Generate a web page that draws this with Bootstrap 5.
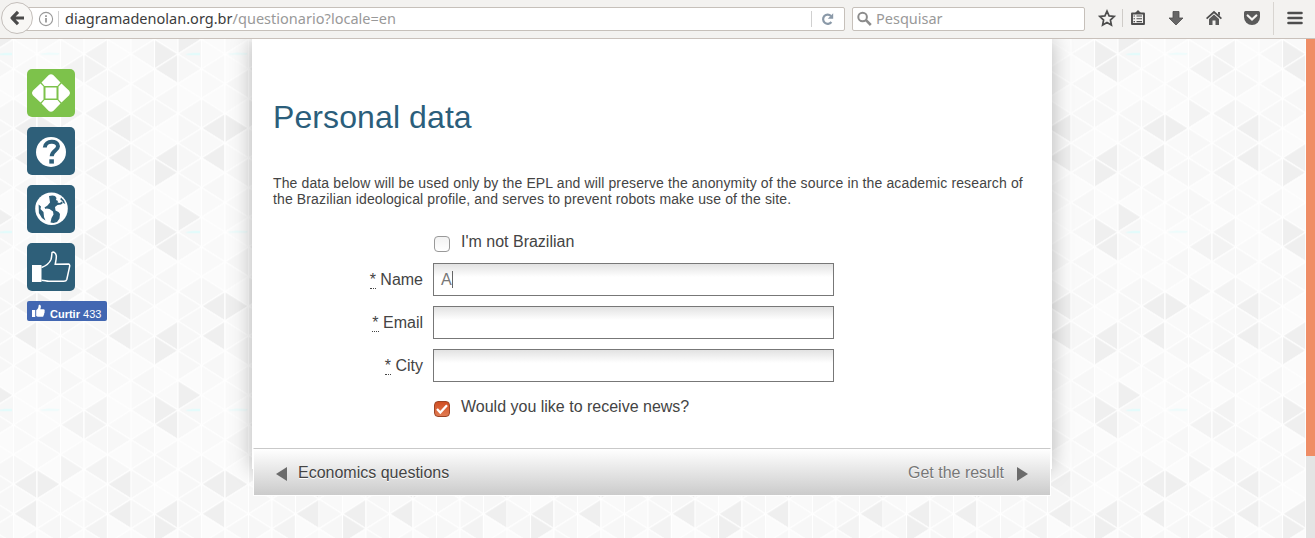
<!DOCTYPE html>
<html lang="en">
<head>
<meta charset="utf-8">
<title>Personal data</title>
<link href="https://cdn.jsdelivr.net/npm/bootstrap@5.3.0/dist/css/bootstrap.min.css" rel="stylesheet">
<script src="https://cdn.jsdelivr.net/npm/bootstrap@5.3.0/dist/js/bootstrap.bundle.min.js"></script>
<style>
body{height:538px;overflow:hidden;font-family:"Liberation Sans",Arial,sans-serif;font-size:16px;line-height:20px;color:#444;background:#fbfbfb}
.chrome-bar{height:39px;background:#f3f2f0;border-bottom:1px solid #c9c1bb;font-family:"Noto Sans",sans-serif;font-size:14.5px;position:relative;z-index:2}
.url-box{width:828px;height:24px;margin-left:17px;border:1px solid #c6c0ba;border-radius:2px;background:#fff;padding-left:20px}
.back-btn{position:absolute;left:1px;top:2px;width:32px;height:32px;border-radius:50%;border:1px solid #c4bfbb;background:#f8f7f5}
.sep{width:1px;height:16px;background:#d0d0d0}
.url-text{margin-left:2px;margin-top:-2px;letter-spacing:.02px}
.host{color:#3c3c3c}.path-part{color:#999}
.search-box{width:233px;height:24px;margin-left:7px;border:1px solid #c6c0ba;border-radius:2px;background:#fff;color:#999}
.search-text{margin-top:-2px}
.stage{height:499px;position:relative}
.bg-art{position:absolute;left:0;top:0;z-index:0}
.side{width:252px;padding:30px 0 0 27px;gap:10px;z-index:1}
.tile-btn{width:48px;height:48px;border-radius:5px;background:#2e5f79}
.tile-btn.green{background:#7dc24b}
.tile-btn svg,.like svg{display:block}
.like{width:80px;height:20px;border-radius:2px;background:#4267b2;color:#fff;font-size:11px;line-height:20px;padding:3px 0 0 5px;gap:5px}
.panel{width:800px;height:430px;background:#fff;box-shadow:0 0 20px rgba(0,0,0,.27);z-index:1;padding:0 1px}
.panel-body{height:409px;padding:0 20px}
h1{font-size:32px;line-height:38px;color:#2b5e7b;font-weight:400;letter-spacing:.1px;padding-top:59px;margin:0 0 39px}
.intro{font-size:14px;line-height:16px;margin:0;letter-spacing:.128px;white-space:nowrap}
.lbl{width:150px;text-align:right}
.lbl abbr{text-decoration:none;border-bottom:1px dotted #444;cursor:default;display:inline-block;line-height:17px}
.fld{width:401px;height:33px;border:1px solid #777;border-radius:0;background:linear-gradient(#e2e2e2,#fff 13px);padding:0 7px;font-size:16px;line-height:31px;color:#777}
.caret{width:1px;height:17px;background:#666}
.box{width:16px;height:16px;border:1px solid #999;border-radius:4px;background:linear-gradient(#f2f2f2,#fff)}
.box.on{border-color:#9c4425;background:linear-gradient(#d04e22,#e17b52)}
.foot{height:48px;border:1px solid #fff;border-top-color:#c9c9c9;background:linear-gradient(#fff,#cbcbcb) padding-box;padding:2px 21px 0 22px;text-shadow:0 1px 0 #fff}
.foot svg{position:relative;top:1px}
.scroll{width:9px;background:#e4e4e4;z-index:1}
.thumb{height:417px;background:#ef8d66}
</style>
</head>
<body>
<header class="chrome-bar d-flex align-items-center">
  <div class="url-box d-flex align-items-center">
    <svg width="16" height="16" viewBox="0 0 16 16" fill="none" stroke="#999"><circle cx="8" cy="8" r="6.6" stroke-width="1.1"/><path d="M8 7v4.400M8 4.200v1.700" stroke-width="1.800"/></svg>
    <span class="sep mx-1"></span>
    <span class="url-text text-nowrap"><span class="host">diagramadenolan.org.br</span><span class="path-part">/questionario?locale=en</span></span>
    <span class="sep ms-auto"></span>
    <svg class="ms-2 me-2" width="16" height="16" viewBox="0 0 16 16" fill="none" stroke="#8a99a8" stroke-width="2.200"><path d="M11.400 11A4.600 4.600 0 1 1 11 5"/><path d="M13.200 2.300v5.500H7.800z" fill="#8a99a8" stroke="none"/></svg>
  </div>
  <div class="back-btn d-flex align-items-center justify-content-center">
    <svg width="16" height="16" viewBox="0 0 16 16" fill="none" stroke="#4a4a4a" stroke-width="3.200"><path d="M9 1.800 3 8l6 6.200M3 8h12" stroke-linejoin="round"/></svg>
  </div>
  <div class="search-box d-flex align-items-center">
    <svg class="ms-1" width="15" height="16" viewBox="0 0 15 16" fill="none" stroke="#8c8c8c"><circle cx="5.600" cy="6" r="4.300" stroke-width="2"/><path d="m9 9.200 4.800 4.800" stroke-width="2.600"/></svg>
    <span class="search-text ms-1">Pesquisar</span>
  </div>
  <svg width="230" height="38" viewBox="1085 0 230 38" fill="none" stroke="#4d4d4d">
    <path d="m1107 11.200 2.100 4.700 5.100.6-3.800 3.500 1 5-4.400-2.600-4.400 2.600 1-5-3.800-3.500 5.100-.6z" stroke-width="1.700"/>
    <path d="M1122.500 9v18" stroke="#cfccc8"/>
    <path d="M1132 13.500h12v10.500h-12z" stroke-width="1.900" stroke-linejoin="round"/><path d="M1134.500 13.500l3.500-3.500 3.500 3.500z" fill="#4d4d4d" stroke="none"/><path d="M1136.500 16h5.500M1136.500 18.800h5.500M1136.500 21.600h5.500M1133.500 16h1.500M1133.500 18.800h1.500M1133.500 21.600h1.500" stroke-width="1.100"/>
    <path d="M1173 11.500h6v6.500h4l-7 7-7-7h4z" fill="#666" stroke="#4d4d4d" stroke-width=".8"/>
    <path d="M1206.600 18.700 1214 12l7.400 6.700" stroke-width="1.700"/><path d="M1209 19l5-4.500 5 4.500v6h-3.500v-4.500h-3V25h-3.500zM1218 12h2v4l-2-1.500z" fill="#5a5a5a" stroke="none"/>
    <path d="M1244 12.500q0-1.500 1.500-1.500h13q1.500 0 1.500 1.500V17a8 8 0 0 1-16 0z" fill="#5a5a5a" stroke="none"/><path d="m1247.700 15.500 4.300 4 4.300-4" stroke="#f5f4f2" stroke-width="2.300" stroke-linecap="round"/>
    <path d="M1273.500 2v33" stroke="#d8d5d1"/>
    <path d="M1288.500 13h13M1288.500 18h13M1288.500 23h13" stroke-width="2.600" stroke-linecap="round"/>
  </svg>
</header>

<main class="stage d-flex">
  <svg class="bg-art" width="1306" height="499" aria-hidden="true">
    <defs>
      <pattern id="tri" x="131" y="0.300" width="188" height="178" patternUnits="userSpaceOnUse"></pattern>
    </defs>
    <rect width="1306" height="499" fill="url(#tri)"/>
  </svg>

  <nav class="side d-flex flex-column">
    <a class="tile-btn green"><svg width="48" height="48" viewBox="0 0 48 48" fill="#fff"><path d="M17.500 17 14.500 13.500l7-7.200q2.500-2.200 5 0l7 7.200-3 3.500zM17.500 31l-3 3.500 7 7.200q2.500 2.200 5 0l7-7.200-3-3.500zM16.500 17.500 13.500 14.500l-7.700 7.200q-1.800 2.300 0 4.600l7.700 7.200 3-3zM31.500 17.500l3-3 7.700 7.200q1.800 2.300 0 4.600l-7.700 7.200-3-3zM18.500 18.500h11v11h-11z"/></svg></a>
    <a class="tile-btn"><svg width="48" height="48" viewBox="0 0 48 48"><circle cx="24" cy="25" r="15" fill="#fff"/><path d="M17.800 20.500c.3-7.300 13.200-7.500 13.200-1.200 0 4.200-6.300 4.300-6.300 10" fill="none" stroke="#2e5f79" stroke-width="4"/><path d="M22.300 32.300h4.600v4.300h-4.600z" fill="#2e5f79"/></svg></a>
    <a class="tile-btn"><svg width="48" height="48" viewBox="0 0 48 48"><circle cx="24.500" cy="23.700" r="16.300" fill="#fff"/><path d="M22 11l3.500-.6 2.500.6 1.500 2-.5 2 2 1-.5 1.500 2.500.5 1.500-1.500 1.500 1.500-2 1.500-3.500.5-2.500 2 .5 3.500 3 1.500 1.500 2-.5 4.500-2.500 3.500-3.500 1-3-.5 1-4.500 2-3.500-.5-3-3.500-2.500-3-.5-1 .5-1-1.500 3-2 2.500-3-.5-3.500zM11.600 19.600l2.400 2-.5 2.500 3 3 .5 5 1.500 3.500-3.600-2.600-3-5zM34 12.500l3 3 1.300 3.500-2-1-1-2-2-1.500z" fill="#2e5f79"/></svg></a>
    <a class="tile-btn"><svg width="48" height="48" viewBox="0 0 48 48"><path d="M5 22h9.500v17H5z" fill="#fff"/><path d="M14.500 24.500c4-1.500 8-4.500 9.500-8 .8-2.500.7-5 1-7 1.800-1.200 4 .8 4.300 3.500.2 3-.6 5.500-1.100 8.300l13.300-.2c1.200.3 1.500 1.500 1 3L39.800 36.500c-.5 1.500-1.300 1.800-3 1.800H22c-3 0-4.500-1-7.500-1" fill="none" stroke="#fff" stroke-width="1.500"/></svg></a>
    <a class="like d-flex text-decoration-none"><svg width="13" height="14" viewBox="0 0 13 14" fill="#fff"><path d="M0 6h3.200v7H0zM4.200 6.200C6 5 6.500 3.600 6.600 1.500c.2-1.200 2.300-.9 2.300 1.100 0 1-.3 1.900-.6 2.600h3c1.500 0 1.700 1.100 1.200 2 .4.800.2 1.500-.3 2 .2.800 0 1.400-.5 1.800 0 1.300-.6 1.800-1.700 1.800H6.300c-1 0-1.300-.3-2.100-.7z"/></svg><span class="text-nowrap"><b>Curtir</b> 433</span></a>
  </nav>

  <section class="panel">
    <div class="panel-body">
      <h1>Personal data</h1>
      <p class="intro">The data below will be used only by the EPL and will preserve the anonymity of the source in the academic research of<br>the Brazilian ideological profile, and serves to prevent robots make use of the site.</p>
      <form class="d-flex flex-column">
        <div class="d-flex" style="margin-top:25px"><span class="lbl"></span><span class="box" style="margin:4px 11px 0 11px"></span><span>I'm not Brazilian</span></div>
        <div class="d-flex align-items-center" style="margin-top:11px"><label class="lbl"><abbr>*</abbr> Name</label><div class="fld d-flex align-items-center" style="margin-left:10px">A<span class="caret"></span></div></div>
        <div class="d-flex align-items-center" style="margin-top:10px"><label class="lbl"><abbr>*</abbr> Email</label><div class="fld" style="margin-left:10px"></div></div>
        <div class="d-flex align-items-center" style="margin-top:10px"><label class="lbl"><abbr>*</abbr> City</label><div class="fld" style="margin-left:10px"></div></div>
        <div class="d-flex" style="margin-top:15px"><span class="lbl"></span><span class="box on" style="margin:4px 11px 0 11px"><svg class="d-block" width="14" height="14" viewBox="0 0 14 14" fill="none" stroke="#fff" stroke-width="2.300"><path d="m2 7 3.300 3.500L12 3.300"/></svg></span><span>Would you like to receive news?</span></div>
      </form>
    </div>
    <footer class="foot d-flex align-items-center">
      <svg width="12" height="14" viewBox="0 0 12 14"><path d="M11 0v14L0 7z" fill="#6b6b6b"/></svg>
      <span style="margin-left:10px">Economics questions</span>
      <span class="ms-auto" style="color:#777">Get the result</span>
      <svg style="margin-left:9px" width="16" height="14" viewBox="-4 0 16 14"><path d="M0 0v14l11-7z" fill="#6b6b6b"/></svg>
    </footer>
  </section>

  <div class="scroll ms-auto"><div class="thumb"></div></div>
</main>
<script>
// Triangle mosaic: 8 columns by 12 half-steps, one shade per triangle.
(() => {
  const W = 23.5, H = 178 / 12;
  const dark = {1:[1,2,8,9], 2:[0], 3:[6,8], 4:[6], 7:[6,8]};
  const mid = {5:[2,5], 6:[1,2,5,9]};
  const pale = {0:[1,3,5,6,8,9,11], 1:[4,5], 2:[1,2,5,6,7,8,9,10], 3:[5,10], 4:[3,9], 5:[7,9,11], 6:[3,7,8,11], 7:[3,5,7]};
  const has = (m, c, k) => (m[c] || []).includes(k);
  let s = '<rect width="188" height="178" fill="#fbfbfb"/>';
  for (let c = 0; c < 8; c++) for (let k = 0; k <= 12; k++) {
    const kk = k % 12, x = c * W, y = k * H, right = (c + k) % 2 === 0;
    const a = right ? x : x + W, b = right ? x + W : x;
    const f = has(dark, c, kk) ? '#efefef' : has(mid, c, kk) ? '#f3f3f3' : has(pale, c, kk) ? '#f7f7f7' : ((c * 5 + kk * 3) % 4 < 2 ? '#f9f9f9' : '#fbfbfb');
    s += `<path d="M${a} ${y - H}V${y + H}L${b} ${y}z" fill="${f}" stroke="#fff" stroke-width="1.2"/>`;
  }
  s += '<path d="M54 15l8-1.200h7v2h-12z" fill="#dffcfc"/><path d="M97 14.800l8-1.200 12 .4-2 1.600H99z" fill="#ebfcfc"/>';
  document.getElementById('tri').innerHTML = s;
})();
</script>
</body>
</html>
